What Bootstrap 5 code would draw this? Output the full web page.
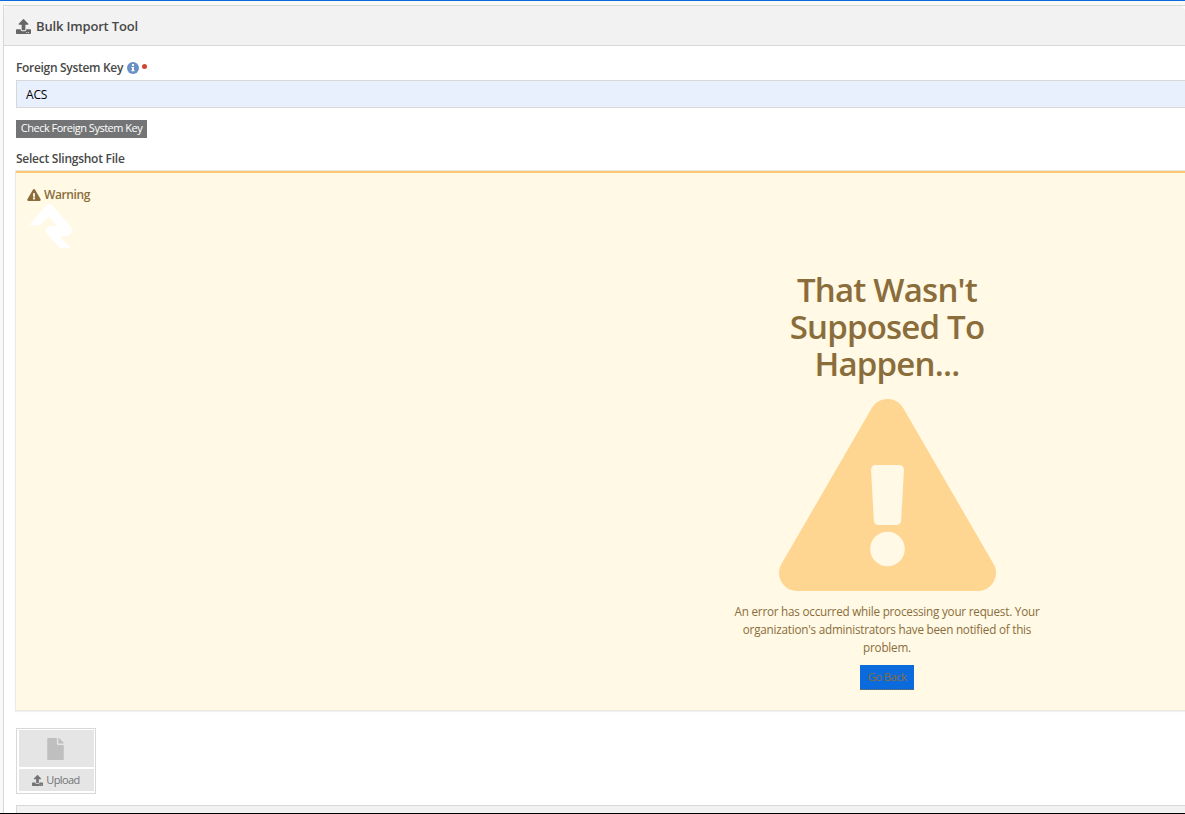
<!DOCTYPE html>
<html lang="en">
<head>
<meta charset="utf-8">
<meta name="viewport" content="width=device-width, initial-scale=1">
<title>Bulk Import Tool</title>
<link rel="stylesheet" href="https://cdn.jsdelivr.net/npm/bootstrap@5.3.0/dist/css/bootstrap.min.css">
<style>
html,body{height:100%;overflow:hidden}
body{font-family:"Open Sans","Noto Sans",sans-serif;font-size:12px;line-height:18px;color:#484848;background:#f9f9f9}
.page-frame{height:814px;border-top:1px solid #0c6bdc;border-bottom:1px solid #000;padding:4px 0 0 3px;overflow:hidden}
.tool-panel{border:1px solid #d8d8d8;border-right:0;border-radius:0;height:900px;background:#fff}
.tool-head{height:40px;background:#f2f2f2;border-bottom:1px solid #d8d8d8;border-radius:0;padding:2px 12px 0;gap:5px}
.tool-head h1{font-size:13px;font-weight:600;letter-spacing:-.17px}
.tool-body{padding:13px 0 0 12px}
.field-label{font-size:12px;font-weight:600;line-height:18px;height:18px;letter-spacing:-.25px}
.key-label{margin-bottom:3px;letter-spacing:-.31px}
.form-control.key-input{height:28px;border:1px solid #d8d8d8;border-right:0;border-radius:0;background:#e8effd;color:#000;font-size:12px;padding:0 9px;letter-spacing:-.2px}
.req{width:5px;height:5px;background:#d4442e;margin:0 0 4px 3px}
.check-btn{height:18px;width:131px;background:#737475;color:#fff;border:0;border-radius:0;font-size:11px;line-height:16px;padding:0 0 2px;letter-spacing:-.5px;margin-top:12px}
.file-label{margin-top:12px}
.alert.warn{margin:2px 0 0 -1px;height:541px;border:1px solid #ece9e0;border-top:0;border-right:0;border-radius:0;background:#fff9e5;color:#8a6d3b;padding:0 0 0 11px;box-shadow:inset 0 1px #e9e9ec,inset 0 3px #ffc870,0 1px 1px #f1f1f1}
.warn-title{font-weight:600;padding-top:16px;gap:3px;letter-spacing:-.4px}
.err-block{width:330px;margin:21px 133px 0 auto}
.err-title{font-size:33px;line-height:37px;font-weight:600;width:240px;margin:0 0 17px;letter-spacing:-.8px}
.err-text{width:330px;margin:11px 0 9px;font-size:11.7px;letter-spacing:-.22px}
.btn.back{height:25px;width:54px;background:#0c6bdc;color:#8a6d3b;border:0;border-bottom:1px dotted #8a6d3b;border-radius:0;font-size:11.3px;padding:0;line-height:24px;letter-spacing:-.6px}
.uploader{width:80px;height:66px;border:1px solid #d8d8d8;padding:1px 1px 2px 2px;margin-top:17px;gap:2px;color:#737475}
.uploader>div{background:#e5e5e5}
.thumb{height:37px;padding-right:2px}.pick{height:22px;font-size:11px;gap:3px;letter-spacing:-.6px;padding-right:1px}
.next-well{height:60px;border:1px solid #d8d8d8;border-right:0;background:#f2f2f2;margin-top:11px}
svg{display:block;flex:none}
</style>
</head>
<body>
<svg width="0" height="0" class="position-absolute"><defs>
<symbol id="up" viewBox="0 0 512 512"><path fill="currentColor" d="M296 384h-80c-13.300 0-24-10.700-24-24V192h-87.700c-17.800 0-26.700-21.500-14.100-34.100L242.300 5.700c7.500-7.500 19.800-7.500 27.300 0l152.200 152.200c12.600 12.600 3.700 34.100-14.100 34.100H320v168c0 13.300-10.700 24-24 24zm216-8v112c0 13.300-10.700 24-24 24H24c-13.300 0-24-10.700-24-24V376c0-13.300 10.700-24 24-24h136v8c0 30.900 25.100 56 56 56h80c30.900 0 56-25.100 56-56v-8h136c13.300 0 24 10.700 24 24zm-124 88c0-11-9-20-20-20s-20 9-20 20 9 20 20 20 20-9 20-20zm64 0c0-11-9-20-20-20s-20 9-20 20 9 20 20 20 20-9 20-20z"/></symbol>
<symbol id="tri" viewBox="0 0 576 512"><path fill="currentColor" d="M569.517 440.013C587.975 472.007 564.806 512 527.940 512H48.054c-36.937 0-59.999-40.055-41.577-71.987L246.423 23.985c18.467-32.009 64.720-31.951 83.154 0l239.940 416.028zM288 354c-25.405 0-46 20.595-46 46s20.595 46 46 46 46-20.595 46-46-20.595-46-46-46zm-43.673-165.346l7.418 136c.347 6.364 5.609 11.346 11.982 11.346h48.546c6.373 0 11.635-4.982 11.982-11.346l7.418-136c.375-6.874-5.098-12.654-11.982-12.654h-63.383c-6.884 0-12.356 5.780-11.981 12.654z"/></symbol>
</defs></svg>
<main class="page-frame">
 <section class="card tool-panel">
  <div class="card-header tool-head d-flex align-items-center">
   <svg width="15" height="15" style="color:#666"><use href="#up"/></svg>
   <h1 class="m-0">Bulk Import Tool</h1>
  </div>
  <div class="card-body tool-body">
   <label class="field-label key-label d-flex align-items-center" for="key">Foreign System Key
    <svg class="ms-1" width="12" height="12" viewBox="0 0 12 12"><circle cx="6" cy="6" r="6" fill="#6a90c5"/><path fill="#fff" d="M5 2h2v2H5zM4.300 5H7v3.200h.7v1H4.300v-1H5V6h-.7z"/></svg>
    <span class="req rounded-circle"></span></label>
   <input class="form-control key-input" id="key" value="ACS">
   <button class="btn check-btn d-block">Check Foreign System Key</button>
   <div class="field-label file-label">Select Slingshot File</div>
   <div class="alert warn" role="alert">
    <div class="warn-title d-flex align-items-center"><svg width="14" height="12"><use href="#tri"/></svg>Warning</div>
    <svg width="46" height="46" viewBox="0 0 46 47"><path fill="#fff" d="M1.500 22 18 2.500Q22-2.500 26.500 2.500L45 24q2 6-4 8.500-3 .7-8 .5L44 45H33L20 30.500q-4-6 2.500-8H30.500L22 13 14 20.500Q12.500 22 9 22Z"/></svg>
    <div class="err-block d-flex flex-column align-items-center text-center">
     <h2 class="err-title">That Wasn't Supposed To Happen...</h2>
     <svg width="217" height="192" viewBox="0 0 576 512" preserveAspectRatio="none" style="color:#ffd592"><use href="#tri" width="576" height="512"/></svg>
     <p class="err-text">An error has occurred while processing your request. Your organization's administrators have been notified of this problem.</p>
     <a class="btn back">Go Back</a>
    </div>
   </div>
   <div class="uploader d-flex flex-column">
    <div class="thumb d-flex align-items-center justify-content-center"><svg width="17" height="22" viewBox="0 0 384 512"><path fill="#bfbfbf" d="M224 136V0H24C10.700 0 0 10.700 0 24v464c0 13.300 10.700 24 24 24h336c13.300 0 24-10.700 24-24V160H248c-13.200 0-24-10.800-24-24zm160-14.100v6.100H256V0h6.100c6.400 0 12.500 2.500 17 7l97.900 98c4.500 4.500 7 10.600 7 16.900z"/></svg></div>
    <div class="pick d-flex align-items-center justify-content-center"><svg width="11" height="11"><use href="#up"/></svg>Upload</div>
   </div>
   <div class="next-well"></div>
  </div>
 </section>
</main>
<script src="https://cdn.jsdelivr.net/npm/bootstrap@5.3.0/dist/js/bootstrap.bundle.min.js"></script>
</body>
</html>
